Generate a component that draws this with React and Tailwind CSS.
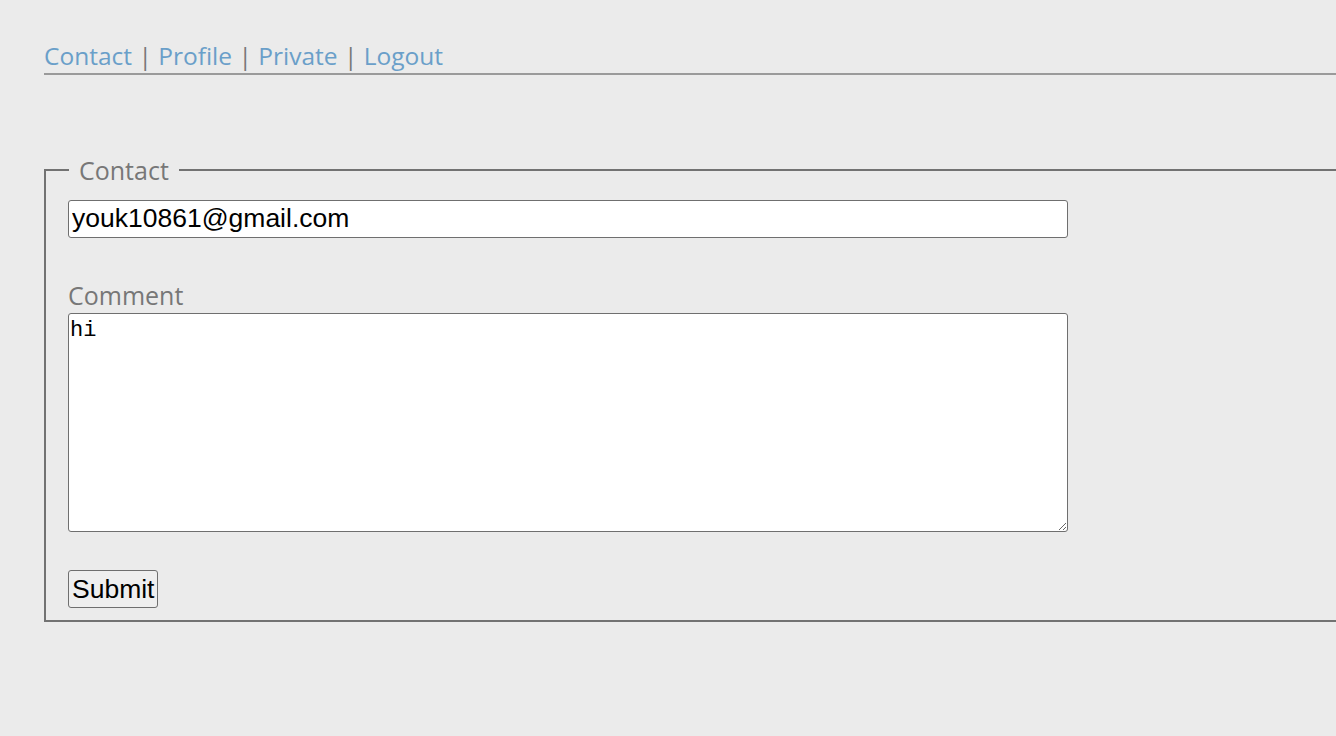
import { useState } from 'react';

function App() {
  const [email, setEmail] = useState('youk10861@gmail.com');
  const [comment, setComment] = useState('hi');

  return (
    <div className="min-h-[736px] w-full overflow-hidden bg-[#ebebeb] font-['Open_Sans','Noto_Sans',sans-serif]">
      <div className="w-[1400px] pl-[44px] pt-[39px]">
        <nav className="border-b-2 border-[#9a9a9a] text-[24.5px] leading-[34px] text-[#777]">
          <a href="#" className="text-[#6a9fc9]">Contact</a> | <a href="#" className="text-[#6a9fc9]">Profile</a> | <a href="#" className="text-[#6a9fc9]">Private</a> | <a href="#" className="text-[#6a9fc9]">Logout</a>
        </nav>

        <form className="mt-[80px]" onSubmit={(e) => e.preventDefault()}>
          <fieldset className="border-2 border-[#727272] pl-[22px] pb-[12px] pt-[15px]">
            <legend className="ml-[1px] px-[10px] text-[25px] leading-[30px] text-[#777]">Contact</legend>
            <input
              type="email"
              value={email}
              onChange={(e) => setEmail(e.target.value)}
              className="block h-[38px] w-[1000px] rounded-[3px] border border-[#6f6f6f] bg-white px-[3px] font-['Liberation_Sans',Arial,sans-serif] text-[26.5px] text-black"
            />
            <label className="mt-[42px] block text-[25px] leading-[30px] text-[#777]">Comment</label>
            <textarea
              value={comment}
              onChange={(e) => setComment(e.target.value)}
              className="mt-[3px] block h-[219px] w-[1000px] rounded-[3px] border border-[#6f6f6f] bg-white px-[1px] pt-[2px] font-['Liberation_Mono',monospace] text-[22px] leading-[30px] text-black"
            />
            <button
              type="submit"
              className="mt-[38px] block h-[38px] rounded-[3px] border border-[#6f6f6f] bg-[#efefef] px-[3px] font-['Liberation_Sans',Arial,sans-serif] text-[26.5px] leading-[30px] text-black"
            >
              Submit
            </button>
          </fieldset>
        </form>
      </div>
    </div>
  );
}

export default App;
